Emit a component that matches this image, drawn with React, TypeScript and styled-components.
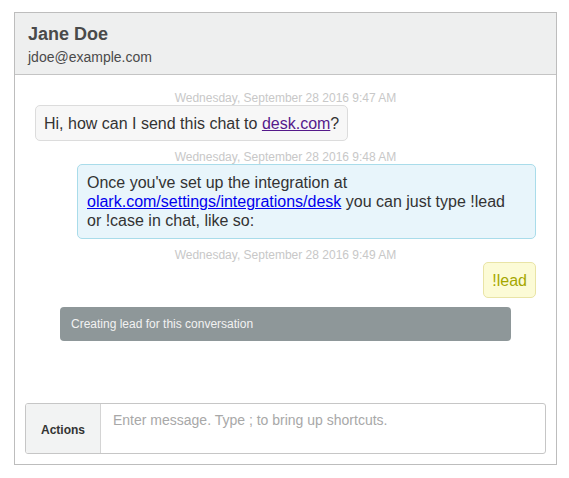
import React from "react";
import styled, { createGlobalStyle } from "styled-components";

const Global = createGlobalStyle`
  html, body { margin: 0; padding: 0; background: #fff; }
  body { font-family: "Liberation Sans", Arial, Helvetica, sans-serif; }
  * { box-sizing: border-box; }
`;

const Page = styled.div`
  padding: 12px 12px 13px 14px;
`;

const Frame = styled.div`
  width: 543px;
  height: 453px;
  border: 1px solid #bdbdbd;
  display: flex;
  flex-direction: column;
  background: #fff;
`;

const Header = styled.div`
  background: #eeefef;
  border-bottom: 1px solid #c4c4c4;
  padding: 10px 13px 8px;
  display: flex;
  flex-direction: column;
  gap: 4px;
`;

const Name = styled.div`
  font-size: 18px;
  line-height: 22px;
  font-weight: bold;
  color: #4a4a4a;
`;

const Email = styled.div`
  font-size: 14px;
  line-height: 17px;
  color: #4a4a4a;
`;

const Body = styled.div`
  flex: 1;
  display: flex;
  flex-direction: column;
  padding: 16px 20px 0 20px;
`;

const Stamp = styled.div`
  text-align: center;
  font-size: 12px;
  line-height: 14px;
  color: #c8c8c8;
`;

const Group = styled.div<{ $first?: boolean }>`
  display: flex;
  flex-direction: column;
  margin-top: ${(p) => (p.$first ? 0 : 9)}px;
`;

type Kind = "visitor" | "operator" | "command";

const Bubble = styled.div<{ $kind: Kind }>`
  align-self: ${(p) =>
    p.$kind === "visitor" ? "flex-start" : p.$kind === "operator" ? "stretch" : "flex-end"};
  ${(p) => (p.$kind === "operator" ? "margin-left: 42px;" : "")}
  font-size: 16px;
  line-height: 19px;
  padding: ${(p) => (p.$kind === "operator" ? "8px 9px 8px 9px" : "8px 8px 7px 8px")};
  border-radius: 5px;
  border: 1px solid
    ${(p) =>
      p.$kind === "visitor" ? "#dcdcdc" : p.$kind === "operator" ? "#a9dcea" : "#e9e4a6"};
  background: ${(p) =>
    p.$kind === "visitor" ? "#f7f7f7" : p.$kind === "operator" ? "#e8f5fb" : "#fcfbd6"};
  color: ${(p) => (p.$kind === "command" ? "#a5a700" : "#333")};
`;

const Link = styled.a<{ $visited?: boolean }>`
  color: ${(p) => (p.$visited ? "#551a8b" : "#0000ee")};
  text-decoration: underline;
`;

const System = styled.div`
  margin: 9px 25px 0;
  background: #8e9799;
  color: #f2f2f2;
  font-size: 12px;
  line-height: 14px;
  padding: 10px 11px;
  border-radius: 4px;
`;

const Composer = styled.div`
  margin: auto 10px 10px;
  height: 51px;
  border: 1px solid #c6c6c6;
  border-radius: 3px;
  display: flex;
  overflow: hidden;
`;

const Actions = styled.div`
  width: 75px;
  background: #f2f3f3;
  border-right: 1px solid #d4d4d4;
  display: flex;
  align-items: center;
  justify-content: center;
  padding-top: 2px;
  font-size: 12px;
  font-weight: bold;
  color: #333;
`;

const Input = styled.div`
  flex: 1;
  padding: 8px 12px;
  font-size: 14px;
  line-height: 17px;
  color: #a8a8a8;
`;

export default function App() {
  return (
    <>
      <Global />
      <Page>
        <Frame>
          <Header>
            <Name>Jane Doe</Name>
            <Email>jdoe@example.com</Email>
          </Header>
          <Body>
            <Group $first>
              <Stamp>Wednesday, September 28 2016 9:47 AM</Stamp>
              <Bubble $kind="visitor">
                Hi, how can I send this chat to <Link $visited href="#">desk.com</Link>?
              </Bubble>
            </Group>
            <Group>
              <Stamp>Wednesday, September 28 2016 9:48 AM</Stamp>
              <Bubble $kind="operator">
                Once you've set up the integration at
                <br />
                <Link href="#">olark.com/settings/integrations/desk</Link> you can just type !lead
                <br />
                or !case in chat, like so:
              </Bubble>
            </Group>
            <Group>
              <Stamp>Wednesday, September 28 2016 9:49 AM</Stamp>
              <Bubble $kind="command">!lead</Bubble>
            </Group>
            <System>Creating lead for this conversation</System>
          </Body>
          <Composer>
            <Actions>Actions</Actions>
            <Input>Enter message. Type ; to bring up shortcuts.</Input>
          </Composer>
        </Frame>
      </Page>
    </>
  );
}
